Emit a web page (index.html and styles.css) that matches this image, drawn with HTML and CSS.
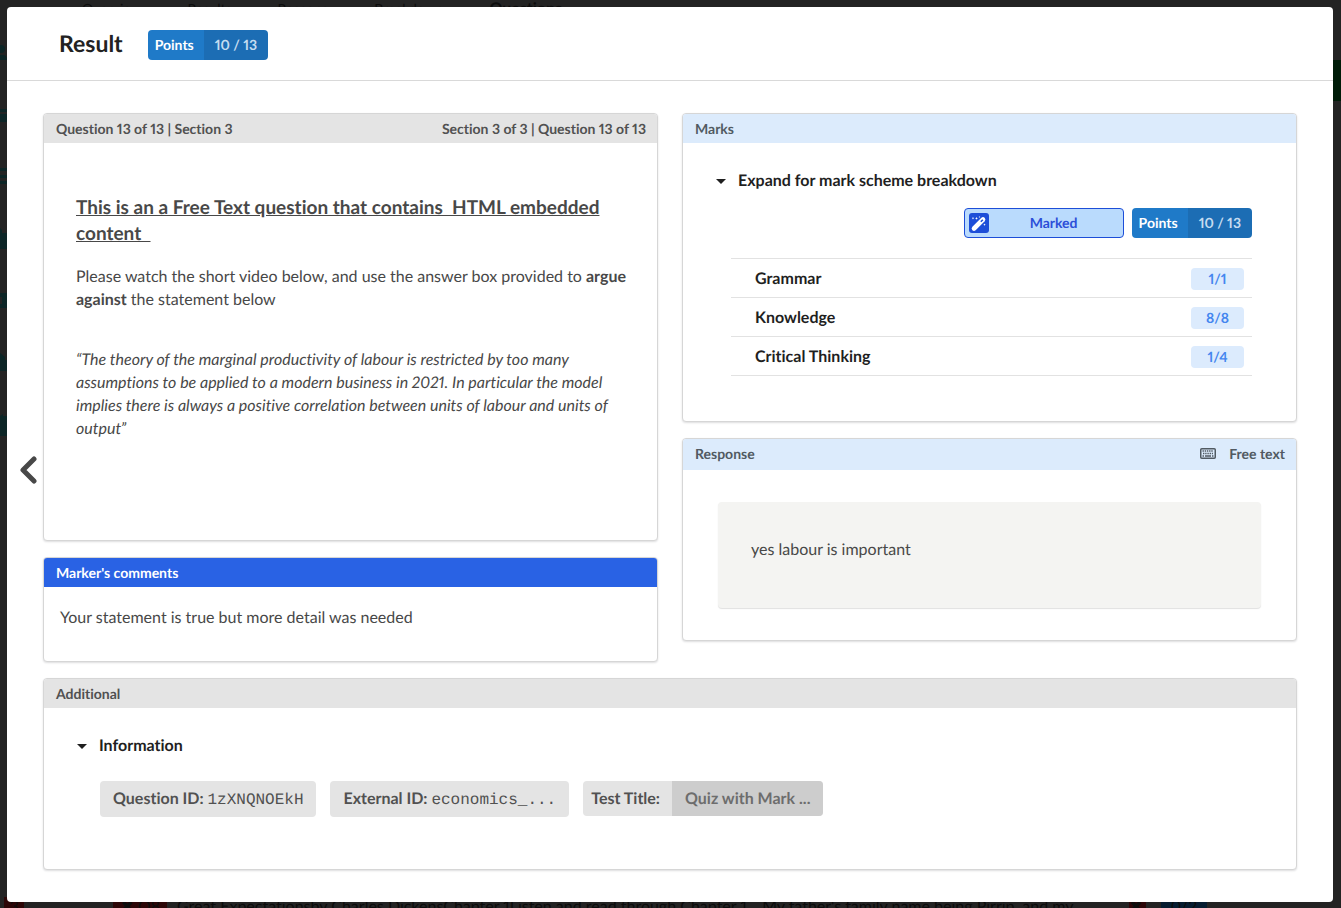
FILE: index.html
```html
<!DOCTYPE html>
<html lang="en">
<head>
    <meta charset="UTF-8">
    <meta name="viewport" content="width=device-width, initial-scale=1.0">
    <title>Result</title>
    <link rel="stylesheet" href="styles.css">
</head>
<body>
    <!-- dimmed page under the modal -->
    <div class="backdrop" aria-hidden="true">
        <div class="back-tabs">
            <span>Overview</span>
            <span>Results</span>
            <span>Reasons</span>
            <span>Breakdown</span>
            <b>Questions</b>
        </div>
        <svg class="back-icons" viewBox="0 0 7 400" width="7" height="400" fill="#0c2526">
            <circle cx="1" cy="9" r="4"/><path d="M0 15h3q4 0 4 5H0z"/>
            <path d="M0 69h7v3H0zM0 74h7v8H0z"/>
            <path d="M0 128h7v3H0zM0 135h7v3H0zM0 141h7v3H0z"/>
            <path d="M0 188l2 2v3h5v16H0z"/>
            <path d="M0 253h7v15H0v-4h2v-7H0z"/>
            <path d="M0 313l5 4v3h2v11H0z"/>
            <path d="M0 376l3-2v2h4v20H0z"/>
        </svg>
        <div class="back-button"></div>
        <div class="back-row">
            <span class="back-dot">3</span>
            <span class="back-tag">✖ Q8</span>
            <span class="back-text">Great Expectationsby Charles DickensChapter 1Listen and read through Chapter 1... My father's family name being Pirrip, and my</span>
            <span class="back-cross">✖</span>
            <span class="back-score">0/2</span>
        </div>
    </div>

    <main class="modal" role="dialog" aria-labelledby="modalTitle">
        <header class="modal-header">
            <h1 id="modalTitle">Result</h1>
            <div class="points">
                <span class="points-name">Points</span>
                <span class="points-value">10 / 13</span>
            </div>
        </header>

        <div class="modal-content">
            <button class="prev-btn" type="button" aria-label="Previous question">
                <svg viewBox="0 0 18 28" width="18" height="28" fill="none" stroke="#484848" stroke-width="5" stroke-linecap="round" stroke-linejoin="round"><path d="M15 3L4 14l11 11"/></svg>
            </button>

            <div class="columns">
                <div class="column">
                    <section class="panel question">
                        <div class="panel-header grey">
                            <span>Question 13 of 13 | Section 3</span>
                            <span>Section 3 of 3 | Question 13 of 13</span>
                        </div>
                        <div class="question-body">
                            <h2>This is an a Free Text question that contains&nbsp; HTML embedded content&nbsp;&nbsp;</h2>
                            <p>Please watch the short video below, and use the answer box provided to <b>argue against</b> the statement below</p>
                            <p class="quote">“The theory of the marginal productivity of labour is restricted by too many assumptions to be applied to a modern business in 2021. In particular the model implies there is always a positive correlation between units of labour and units of output”</p>
                        </div>
                    </section>

                    <section class="panel comments">
                        <div class="panel-header blue">
                            <span>Marker's comments</span>
                        </div>
                        <p class="comments-body">Your statement is true but more detail was needed</p>
                    </section>
                </div>

                <div class="column">
                    <section class="panel marks">
                        <div class="panel-header light">
                            <span>Marks</span>
                        </div>
                        <details class="marks-body" open>
                            <summary>Expand for mark scheme breakdown</summary>
                            <div class="marks-status">
                                <div class="marked">
                                    <svg viewBox="0 0 20 20" width="20" height="20">
                                        <rect width="20" height="20" rx="3" fill="#1d4ed8"/>
                                        <path d="M5 15.500L14 6.500" stroke="#fff" stroke-width="4.600" stroke-linecap="round"/>
                                        <path d="M11.800 8.700l2-2" stroke="#1d4ed8" stroke-width="1.600"/>
                                        <path d="M4 4l.4.800.8.400-.8.400-.4.800-.4-.8-.8-.4.800-.4zM7.500 4l.5 1 1 .4-1 .4-.5 1-.5-1-1-.4 1-.4zM10.500 3l.3.700.7.300-.7.300-.3.700-.3-.7-.7-.3.700-.3zM15.500 10.500l.4.800.8.400-.8.400-.4.800-.4-.8-.8-.4.800-.4z" fill="#fff"/>
                                    </svg>
                                    <span>Marked</span>
                                </div>
                                <div class="points">
                                    <span class="points-name">Points</span>
                                    <span class="points-value">10 / 13</span>
                                </div>
                            </div>
                            <table class="breakdown">
                                <tbody>
                                    <tr><th scope="row">Grammar</th><td><span class="score">1/1</span></td></tr>
                                    <tr><th scope="row">Knowledge</th><td><span class="score">8/8</span></td></tr>
                                    <tr><th scope="row">Critical Thinking</th><td><span class="score">1/4</span></td></tr>
                                </tbody>
                            </table>
                        </details>
                    </section>

                    <section class="panel response">
                        <div class="panel-header light tall">
                            <span>Response</span>
                            <span class="kind">
                                <svg viewBox="0 0 16 11" width="16" height="11">
                                    <rect x="0.750" y="0.750" width="14.500" height="9.500" rx="1" fill="none" stroke="#515a62" stroke-width="1.500"/>
                                    <path d="M2.500 3h11M3 5.500h10" stroke="#515a62" stroke-width="1.500" stroke-dasharray="1.400 0.800"/>
                                    <path d="M2.500 8H4M5 8h6M12 8h1.500" stroke="#515a62" stroke-width="1.500"/>
                                </svg>
                                Free text
                            </span>
                        </div>
                        <div class="response-body">
                            <p class="answer">yes labour is important</p>
                        </div>
                    </section>
                </div>
            </div>

            <section class="panel additional">
                <div class="panel-header grey">
                    <span>Additional</span>
                </div>
                <details class="additional-body" open>
                    <summary>Information</summary>
                    <div class="tags">
                        <div class="tag">Question ID: <code>1zXNQNOEkH</code></div>
                        <div class="tag">External ID: <code>economics_...</code></div>
                        <div class="tag title-tag">Test Title: <span class="tag-detail">Quiz with Mark ...</span></div>
                    </div>
                </details>
            </section>
        </div>
    </main>
</body>
</html>
```
FILE: styles.css
```css
* {
    box-sizing: border-box;
}

body {
    margin: 0;
    padding: 7px 8px 6px 7px;
    min-height: 100vh;
    display: flex;
    background: #232323;
    color: #484848;
    font-family: Lato, "Liberation Sans", sans-serif;
    font-size: 16px;
    font-variant-ligatures: none;
    font-variant-numeric: proportional-nums;
    line-height: 23px;
    text-rendering: geometricPrecision;
}

h1, h2, p {
    margin: 0;
}

/* page behind the modal */
.backdrop {
    position: absolute;
    inset: 0;
    overflow: hidden;
    color: #0c0c0c;
    font-size: 14px;
    line-height: 20px;
}

.back-tabs {
    position: absolute;
    top: -1px;
    left: 82px;
    display: flex;
    gap: 46px;
}

.back-tabs b {
    font-size: 16px;
}

.back-icons {
    position: absolute;
    top: 40px;
    left: 0;
}

.back-button {
    position: absolute;
    top: 60px;
    right: 0;
    width: 12px;
    height: 41px;
    background: #001c08;
}

.back-row {
    position: absolute;
    left: 0;
    right: 0;
    bottom: -9px;
    height: 20px;
    font-size: 16px;
    white-space: nowrap;
}

.back-row span {
    position: absolute;
    top: 0;
}

.back-row .back-dot {
    left: 4px;
    width: 20px;
    border-radius: 0 0 10px 10px;
    background: #2c0607;
    text-align: center;
}

.back-row .back-tag {
    left: 113px;
    width: 54px;
    background: #2c0607;
    text-align: center;
}

.back-row .back-text {
    left: 177px;
}

.back-row .back-cross {
    left: 1129px;
    width: 17px;
    background: #2c0607;
}

.back-row .back-score {
    left: 1161px;
    width: 46px;
    background: #061c30;
    text-align: center;
}

.modal {
    position: relative;
    flex: 1;
    min-width: 0;
    background: #fff;
    border-radius: 4px;
}

.modal-header {
    display: flex;
    align-items: center;
    gap: 25px;
    height: 74px;
    padding: 3px 52px 0;
    border-bottom: 1px solid #d9d9d9;
}

.modal-header h1 {
    padding-bottom: 4px;
    color: #222;
    font-size: 23px;
    font-weight: 700;
    line-height: 28px;
}

.points {
    display: flex;
    height: 30px;
    border-radius: 4px;
    overflow: hidden;
    font-size: 14px;
    font-weight: 700;
    line-height: 30px;
    color: #fff;
}

.points-name {
    padding: 0 10px 0 7px;
    background: #1f7ac8;
}

.points-value {
    padding: 0 11px;
    background: #1c6db4;
    color: #c5dcf0;
}

.modal-content {
    position: relative;
    display: flex;
    flex-direction: column;
    gap: 16px;
    padding: 32px 36px;
}

.prev-btn {
    position: absolute;
    top: 375px;
    left: 12px;
    display: flex;
    padding: 0;
    border: none;
    background: none;
    cursor: pointer;
}

.columns {
    display: grid;
    grid-template-columns: 1fr 1fr;
    gap: 24px;
}

.column {
    display: flex;
    flex-direction: column;
    gap: 16px;
}

.panel {
    background: #fff;
    border: 1px solid #d6d6d6;
    border-radius: 4px;
    box-shadow: 0 1px 2px rgba(34, 36, 38, 0.15);
    overflow: hidden;
}

.panel-header {
    display: flex;
    justify-content: space-between;
    padding: 0 11px 0 12px;
    font-size: 14px;
    font-weight: 700;
    line-height: 29px;
}

.panel-header.grey {
    background: #e4e4e4;
    color: #515151;
}

.panel-header.light {
    background: #dcebfc;
    color: #515a62;
}

.panel-header.blue {
    background: #2962e4;
    color: #fff;
}

.panel-header.tall {
    padding-bottom: 2px;
}

.question-body {
    padding: 52px 24px 100px 32px;
}

.question-body h2 {
    margin-bottom: 18px;
    font-size: 19px;
    font-weight: 700;
    line-height: 26px;
    text-decoration: underline;
}

.quote {
    margin-top: 37px;
    font-style: italic;
}

.comments-body {
    padding: 19px 16px 32px;
}

summary {
    display: flex;
    align-items: center;
    color: #1f1f1f;
    font-weight: 700;
    line-height: 20px;
    cursor: pointer;
    list-style: none;
}

summary::before {
    content: "";
    width: 0;
    margin-right: 12px;
    border: 5px solid transparent;
    border-top-color: #1f1f1f;
    border-bottom: none;
}

.marks-body {
    padding: 28px 44px 45px 33px;
}

.marks-status {
    display: flex;
    justify-content: flex-end;
    gap: 8px;
    margin: 17px 0 20px;
}

.marked {
    display: flex;
    align-items: center;
    width: 160px;
    height: 30px;
    padding: 0 4px;
    border: 1px solid #1d4ed8;
    border-radius: 4px;
    background: #badbfd;
    color: #2c4fd8;
    font-size: 14px;
    font-weight: 700;
    line-height: 20px;
}

.marked span {
    flex: 1;
    text-align: center;
}

.breakdown {
    width: calc(100% - 15px);
    margin-left: 15px;
    border-collapse: collapse;
    color: #1f1f1f;
}

.breakdown tr {
    border-top: 1px solid #e2e2e2;
    border-bottom: 1px solid #e2e2e2;
}

.breakdown th {
    height: 39px;
    padding: 0 24px;
    text-align: left;
}

.breakdown td {
    padding: 0 8px;
    text-align: right;
}

.score {
    display: inline-block;
    width: 53px;
    border-radius: 4px;
    background: #dcebfd;
    color: #4486ef;
    font-size: 14px;
    font-weight: 700;
    line-height: 22px;
    text-align: center;
    vertical-align: middle;
}

.kind {
    display: flex;
    align-items: center;
    gap: 13px;
}

.response-body {
    padding: 32px 35px;
}

.answer {
    padding: 36px 33px 47px;
    border-radius: 4px;
    background: #f4f4f2;
    box-shadow: 0 1px 1px #e0e0e0;
}

.additional-body {
    padding: 28px 33px 52px;
}

.tags {
    display: flex;
    gap: 14px;
    margin: 25px 0 0 23px;
}

.tag {
    height: 36px;
    padding: 0 13px;
    border-radius: 4px;
    background: #e4e4e4;
    color: #515151;
    font-weight: 700;
    line-height: 35px;
}

.tag code {
    font-family: "Liberation Mono", monospace;
    font-size: 16px;
    font-weight: 400;
}

.title-tag {
    display: flex;
    gap: 12px;
    height: 35px;
    padding: 0 0 0 8px;
    overflow: hidden;
}

.tag-detail {
    padding: 0 13px;
    background: #cdcdcd;
    color: #6d6d6d;
}
```
